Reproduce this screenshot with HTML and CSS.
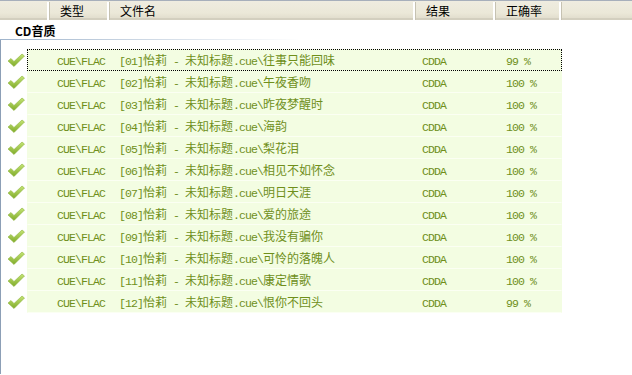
FILE: index.html
```html
<!DOCTYPE html>
<html lang="zh-CN">
<head>
    <meta charset="UTF-8">
    <meta name="viewport" content="width=device-width, initial-scale=1.0">
    <title>CD音质</title>
    <link rel="stylesheet" href="styles.css">
</head>
<body>
    <div class="header">
        <div class="hcol"></div>
        <div class="hcol">类型</div>
        <div class="hcol">文件名</div>
        <div class="hcol">结果</div>
        <div class="hcol">正确率</div>
        <div class="hcol last"></div>
    </div>

    <div class="group">CD音质</div>
    <div class="list" id="rows"></div>

    <script>
        const tracks = [
            ["往事只能回味", "99"],
            ["午夜香吻", "100"],
            ["昨夜梦醒时", "100"],
            ["海韵", "100"],
            ["梨花泪", "100"],
            ["相见不如怀念", "100"],
            ["明日天涯", "100"],
            ["爱的旅途", "100"],
            ["我没有骗你", "100"],
            ["可怜的落魄人", "100"],
            ["康定情歌", "100"],
            ["恨你不回头", "99"]
        ];

        const check = `<svg width="18" height="15" viewBox="0 0 18 15">
            <defs><linearGradient id="g" x1="0" y1="0" x2="0" y2="1">
                <stop offset="0" stop-color="#c4e474"/><stop offset="1" stop-color="#80ab2a"/>
            </linearGradient></defs>
            <path d="M1 8 L4 5.5 L7 8.5 L15 1 L17.5 3 L7 13.5 Z" fill="url(#g)" stroke="#8db43c" stroke-width="0.6"/>
        </svg>`;

        // latin runs get the narrow mono font, chinese stays wide
        function mixed(text) {
            return text.split(/([\u4e00-\u9fff]+)/).map(part =>
                /[\u4e00-\u9fff]/.test(part) ? part : (part ? `<span class="lat">${part}</span>` : "")
            ).join("");
        }

        document.getElementById("rows").innerHTML = tracks.map((t, i) => {
            let n = String(i + 1).padStart(2, "0");
            let name = `[${n}]怡莉 - 未知标题.cue\\${t[0]}`;
            return `<div class="row">
                <div class="icon">${check}</div>
                <div class="cells${i === 0 ? " focus" : ""}">
                    <div class="cell type">${mixed("CUE\\FLAC")}</div>
                    <div class="cell name">${mixed(name)}</div>
                    <div class="cell result">${mixed("CDDA")}</div>
                    <div class="cell rate">${mixed(t[1] + " %")}</div>
                </div>
            </div>`;
        }).join("");
    </script>
</body>
</html>
```

FILE: styles.css
```css
* {
    margin: 0;
    padding: 0;
    box-sizing: border-box;
}

body {
    background: #fff;
    font-family: "Noto Sans CJK SC", sans-serif;
    font-size: 12px;
    color: #000;
    overflow: hidden;
}

.header {
    display: grid;
    grid-template-columns: 50px 60px 306px 80px 66px 1fr;
    height: 20px;
    border-top: 1px solid #a7afbb;
    background: linear-gradient(#efece0, #ebe8d8 70%, #e2dece);
    border-bottom: 2px solid #d3cfbf;
}

.hcol {
    padding-left: 10px;
    line-height: 18px;
    border-right: 1px solid #c6c2b2;
    box-shadow: inset -2px 0 0 #fff;
    margin: 1px 0 2px;
}

.hcol.last {
    border-right: none;
    box-shadow: none;
}

.group {
    height: 20px;
    padding-left: 15px;
    padding-top: 3px;
    font-weight: bold;
    line-height: 16px;
    position: relative;
}

.group::after {
    content: "";
    position: absolute;
    left: 0;
    bottom: 0;
    width: 300px;
    height: 1px;
    background: linear-gradient(to right, #9fb4cc, #ffffff);
}

.list {
    min-height: calc(100vh - 40px);
    border-left: 1px solid #8c9fb6;
    padding-top: 10px;
    margin-top: -1px;
}

.row {
    display: flex;
    height: 22px;
    margin-left: -1px;
}

.icon {
    width: 27px;
    padding: 4px 0 0 7px;
}

.cells {
    display: grid;
    grid-template-columns: 82px 305px 80px 66px;
    background: #f3fde2;
    border: 1px solid transparent;
    border-bottom-color: #fbfff3;
}

.cells.focus {
    border: 1px dotted #000;
}

.cell {
    font-size: 12px;
    line-height: 20px;
    color: #6f8f1a;
    white-space: nowrap;
}

.lat {
    font-family: "Liberation Mono", monospace;
    font-size: 11.5px;
    letter-spacing: -0.9px;
}

.type {
    padding-left: 29px;
}

.name {
    padding-left: 9px;
}

.result {
    padding-left: 7px;
}

.rate {
    padding-left: 11px;
}
```
